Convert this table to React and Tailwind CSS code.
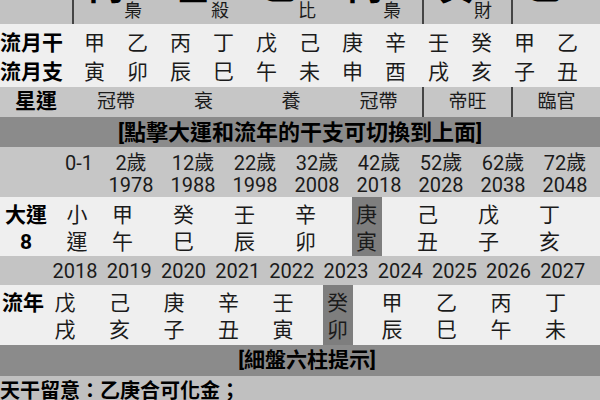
import React from 'react';

const font = "font-['Roboto','Noto_Sans_CJK_TC','Noto_Sans_CJK_SC',sans-serif]";

// top row: cut-off big chars with small ten-god labels
const topCols = [
  { big: '丙', tag: '梟', cls: 'w-[88px] border-l-2 border-[#454545] pl-[14px]' },
  { big: '壬', tag: '殺', cls: 'w-[87px] pl-[15px]' },
  { big: '乙', tag: '比', cls: 'w-[88px] pl-[15px]' },
  { big: '丙', tag: '梟', cls: 'w-[87px] pl-[12px]' },
  { big: '癸', tag: '財', cls: 'w-[89px] border-l-2 border-[#454545] pl-[14px]' },
  { big: '乙', tag: '', cls: 'w-[89px] border-l-2 border-[#454545] pl-[14px]' },
];

const starCols = [
  { text: '冠帶', cls: 'w-[88px]' },
  { text: '衰', cls: 'w-[87px]' },
  { text: '養', cls: 'w-[88px]' },
  { text: '冠帶', cls: 'w-[87px]' },
  { text: '帝旺', cls: 'w-[89px] border-l-2 border-[#454545]' },
  { text: '臨官', cls: 'w-[89px] border-l-2 border-[#454545]' },
];

const monthGan = ['甲', '乙', '丙', '丁', '戊', '己', '庚', '辛', '壬', '癸', '甲', '乙'];
const monthZhi = ['寅', '卯', '辰', '巳', '午', '未', '申', '酉', '戌', '亥', '子', '丑'];

const ages = ['2歲', '12歲', '22歲', '32歲', '42歲', '52歲', '62歲', '72歲'];
const ageYears = ['1978', '1988', '1998', '2008', '2018', '2028', '2038', '2048'];

const dayun = [
  ['甲', '午'], ['癸', '巳'], ['壬', '辰'], ['辛', '卯'],
  ['庚', '寅'], ['己', '丑'], ['戊', '子'], ['丁', '亥'],
];

const years = ['2018', '2019', '2020', '2021', '2022', '2023', '2024', '2025', '2026', '2027'];
const liunian = [
  ['戊', '戌'], ['己', '亥'], ['庚', '子'], ['辛', '丑'], ['壬', '寅'],
  ['癸', '卯'], ['甲', '辰'], ['乙', '巳'], ['丙', '午'], ['丁', '未'],
];

export default function App() {
  return (
    <div className={`w-[600px] h-[400px] overflow-hidden bg-white text-[#1b1b1b] ${font}`}>
      {/* top row, scrolled half out of view */}
      <div className="flex h-[24px] overflow-hidden bg-[#c2c2c2]">
        <div className="w-[72px] shrink-0" />
        {topCols.map((c, i) => (
          <div key={i} className={`flex h-full shrink-0 items-start ${c.cls}`}>
            <span className="-mt-[30px] block w-[36px] text-[36px] font-bold leading-none text-black">{c.big}</span>
            <span className="mt-[2px] block text-[18px] leading-none">{c.tag}</span>
          </div>
        ))}
      </div>

      {/* flowing months */}
      <div className="bg-[#efefef] pt-[5px] h-[63px]">
        <div className="grid grid-cols-[73px_repeat(12,43px)] text-[21px] leading-[29px]">
          <div className="font-bold text-black">流月干</div>
          {monthGan.map((g, i) => (
            <div key={i} className="text-center">{g}</div>
          ))}
          <div className="font-bold text-black">流月支</div>
          {monthZhi.map((z, i) => (
            <div key={i} className="text-center">{z}</div>
          ))}
        </div>
      </div>

      {/* star luck */}
      <div className="flex h-[30px] bg-[#c6c6c6]">
        <div className="flex w-[72px] shrink-0 items-center justify-center text-[21px] font-bold text-black">星運</div>
        {starCols.map((c, i) => (
          <div key={i} className={`flex h-full shrink-0 items-center justify-center text-[19px] ${c.cls}`}>
            {c.text}
          </div>
        ))}
      </div>

      <div className="flex h-[30px] items-center justify-center bg-[#8b8b8b] text-[22px] font-bold text-black">
        [點擊大運和流年的干支可切換到上面]
      </div>

      {/* ages */}
      <div className="h-[50px] bg-[#c6c6c6] pt-[5px]">
        <div className="grid grid-cols-[100px_repeat(8,62px)] text-[20px] leading-[22px]">
          <div className="pr-[7px] text-right">0-1</div>
          {ages.map((a, i) => (
            <div key={i} className="text-center">{a}</div>
          ))}
          <div />
          {ageYears.map((y, i) => (
            <div key={i} className="text-center">{y}</div>
          ))}
        </div>
      </div>

      {/* big luck */}
      <div className="flex h-[59px] bg-[#efefef] text-[21px] leading-[27px]">
        <div className="w-[62px] shrink-0 pl-[5px] pt-[5px]">
          <div className="w-[42px] text-center font-bold text-black">
            <div>大運</div>
            <div>8</div>
          </div>
        </div>
        <div className="w-[30px] shrink-0 pt-[5px] text-center">
          <div>小</div>
          <div>運</div>
        </div>
        {dayun.map((d, i) => (
          <div key={i} className="flex w-[61px] shrink-0 justify-center">
            <div className={`h-full w-[30px] pt-[5px] text-center ${i === 4 ? 'bg-[#7e7e7e]' : ''}`}>
              <div>{d[0]}</div>
              <div>{d[1]}</div>
            </div>
          </div>
        ))}
      </div>

      {/* years */}
      <div className="h-[29px] bg-[#c4c4c4] pl-[48px]">
        <div className="grid h-full grid-cols-[repeat(10,54.2px)] items-center text-[20px] leading-none">
          {years.map((y) => (
            <div key={y} className="text-center">{y}</div>
          ))}
        </div>
      </div>

      {/* flowing years */}
      <div className="flex h-[60px] bg-[#efefef] text-[21px] leading-[27px]">
        <div className="w-[50px] shrink-0 pl-[2px] pt-[5px] font-bold text-black">流年</div>
        {liunian.map((d, i) => (
          <div key={i} className="w-[54.5px] shrink-0">
            <div className={`h-full w-[30px] pt-[5px] text-center ${i === 5 ? 'bg-[#7e7e7e]' : ''}`}>
              <div>{d[0]}</div>
              <div>{d[1]}</div>
            </div>
          </div>
        ))}
      </div>

      <div className="flex h-[31px] items-center justify-center bg-[#8b8b8b] pl-[14px] text-[21px] font-bold text-black">
        [細盤六柱提示]
      </div>

      <div className="h-[24px] overflow-hidden bg-[#c0c0c0] pt-[5px] text-[20px] font-bold leading-none text-black">
        天干留意：乙庚合可化金；
      </div>
    </div>
  );
}
